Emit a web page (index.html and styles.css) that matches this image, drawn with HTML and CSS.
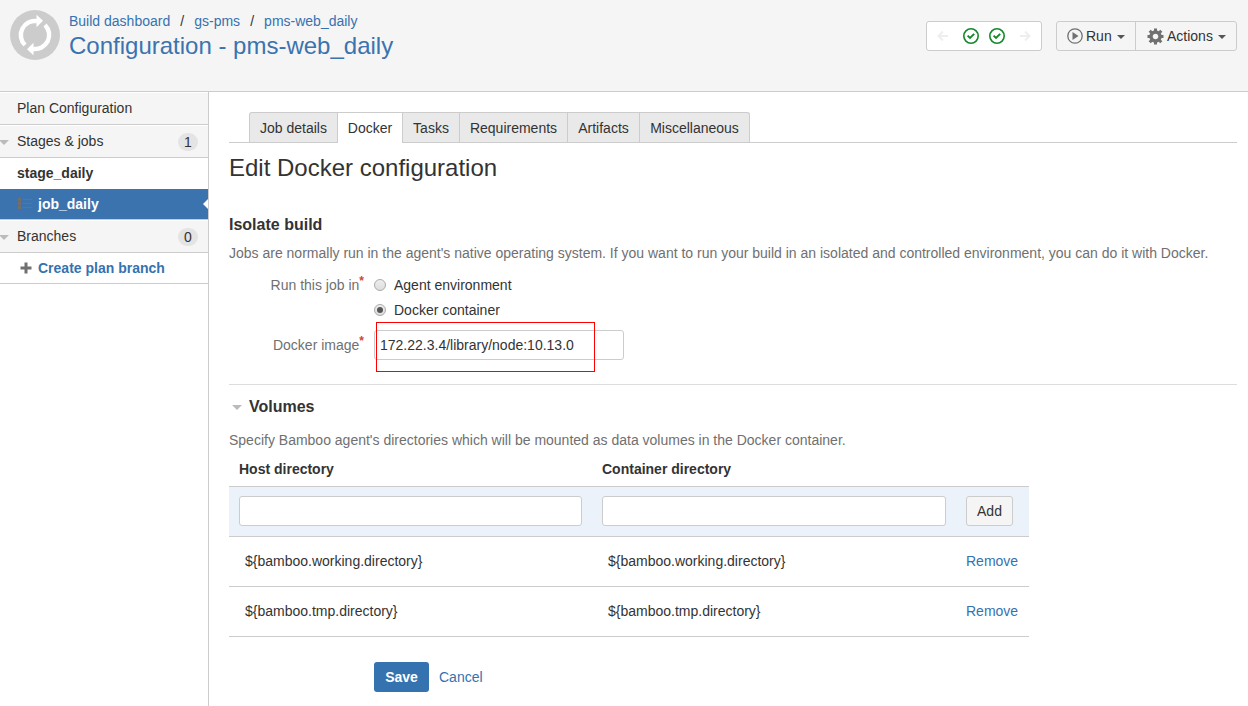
FILE: index.html
```html
<!DOCTYPE html>
<html lang="en">
<head>
<meta charset="utf-8">
<title>Configuration - pms-web_daily</title>
<link rel="stylesheet" href="styles.css">
</head>
<body>
<header class="page-header">
  <svg class="avatar" width="50" height="50" viewBox="0 0 50 50">
    <circle cx="25" cy="25" r="25" fill="#ccc"/>
    <g fill="none" stroke="#fff" stroke-width="4.400">
      <path d="M15 35A14 14 0 0 1 27 11.200"/>
      <path d="M35 15A14 14 0 0 1 23 38.800"/>
    </g>
    <path d="M26.500 4.800l6.500 6-6.500 6.400zM23.500 45.200l-6.500-6 6.500-6.400z" fill="#fff"/>
  </svg>
  <div class="heading">
    <nav class="crumbs"><a>Build dashboard</a><i>/</i><a>gs-pms</a><i>/</i><a>pms-web_daily</a></nav>
    <div class="plan-name">Configuration - pms-web_daily</div>
  </div>
  <div class="history">
    <svg width="12" height="12" viewBox="0 0 12 12" fill="none" stroke="#eee" stroke-width="2"><path d="M11 6H2M6 1.500L1.500 6 6 10.500"/></svg>
    <svg class="ok" width="16" height="16" viewBox="0 0 16 16" fill="none" stroke="#14892c"><circle cx="8" cy="8" r="7.200" stroke-width="1.600"/><path d="M4.600 7.600l2.400 2.300 4.200-4" stroke-width="2"/></svg>
    <svg class="ok" width="16" height="16" viewBox="0 0 16 16" fill="none" stroke="#14892c"><circle cx="8" cy="8" r="7.200" stroke-width="1.600"/><path d="M4.600 7.600l2.400 2.300 4.200-4" stroke-width="2"/></svg>
    <svg width="12" height="12" viewBox="0 0 12 12" fill="none" stroke="#eee" stroke-width="2"><path d="M1 6h9M6 1.500L10.500 6 6 10.500"/></svg>
  </div>
  <div class="button-group">
    <div class="run"><svg width="16" height="16" viewBox="0 0 16 16"><circle cx="8" cy="8" r="7.200" fill="none" stroke="#707070" stroke-width="1.300"/><path d="M5.500 4l6 4-6 4z" fill="#707070"/></svg><span>Run</span><b class="caret"></b></div>
    <div class="actions"><svg width="17" height="17" viewBox="-8.500 -8.500 17 17"><circle r="4.500" fill="none" stroke="#707070" stroke-width="3.400"/><g stroke="#707070" stroke-width="3"><path d="M0-5v-3M0 5v3M-5 0h-3M5 0h3M3.800-3.800l2-2M-3.800 3.800l-2 2M3.800 3.800l2 2M-3.800-3.800l-2-2"/></g></svg><span>Actions</span><b class="caret"></b></div>
  </div>
</header>
<div class="columns">
  <aside class="sidebar">
    <div class="side-row grey plan">Plan Configuration</div>
    <div class="side-row grey section"><b class="twixie"></b>Stages &amp; jobs<span class="count">1</span></div>
    <div class="side-row stage">stage_daily</div>
    <div class="side-row job">
      <svg width="15" height="12" viewBox="0 0 15 12" fill="#707070" shape-rendering="crispEdges"><path d="M0 0h3v3H0zM0 4h3v3H0zM0 8h3v3H0zM5 1h9v1H5zM5 5h9v1H5zM5 9h9v1H5z"/></svg>
      <span>job_daily</span><b class="pointer"></b>
    </div>
    <div class="side-row grey section"><b class="twixie"></b>Branches<span class="count">0</span></div>
    <div class="side-row create"><svg width="12" height="12" viewBox="0 0 12 12"><path d="M4.500 0.500h3v4H11.500v3H7.500V11.500h-3V7.500H.5v-3h4z" fill="#707070"/></svg><a>Create plan branch</a></div>
  </aside>
  <main class="content">
    <nav class="tabs">
      <a class="tab t-job">Job details</a><a class="tab t-docker">Docker</a><a class="tab t-tasks">Tasks</a><a class="tab t-req">Requirements</a><a class="tab t-art">Artifacts</a><a class="tab t-misc">Miscellaneous</a>
    </nav>
    <h1>Edit Docker configuration</h1>
    <h2>Isolate build</h2>
    <p class="desc isolate">Jobs are normally run in the agent's native operating system. If you want to run your build in an isolated and controlled environment, you can do it with Docker.</p>
    <div class="field"><div class="label">Run this job in<sup>*</sup></div><span class="radio"></span><span>Agent environment</span></div>
    <div class="field second"><div class="label"></div><span class="radio checked"></span><span>Docker container</span></div>
    <div class="field image"><div class="label">Docker image<sup>*</sup></div><div class="text-input">172.22.3.4/library/node:10.13.0<span class="marker"></span></div></div>
    <div class="divider"></div>
    <h2 class="volumes"><b class="twixie-inline"></b>Volumes</h2>
    <p class="desc mounted">Specify Bamboo agent's directories which will be mounted as data volumes in the Docker container.</p>
    <div class="table">
      <div class="tr head"><span>Host directory</span><span>Container directory</span></div>
      <div class="tr add"><span class="box"></span><span class="box"></span><span class="add-button">Add</span></div>
      <div class="tr"><span class="value">${bamboo.working.directory}</span><span class="value">${bamboo.working.directory}</span><a>Remove</a></div>
      <div class="tr"><span class="value">${bamboo.tmp.directory}</span><span class="value">${bamboo.tmp.directory}</span><a>Remove</a></div>
    </div>
    <div class="buttons"><span class="save">Save</span><a>Cancel</a></div>
  </main>
</div>
</body>
</html>
```
FILE: styles.css
```css
* { box-sizing: border-box; }
body { margin: 0; height: 706px; overflow: hidden; display: flex; flex-direction: column; background: #fff; color: #333; font: 14px/20px Arial, "Liberation Sans", sans-serif; }
a { color: #3572b0; }
svg { display: block; flex: none; }
h1, h2, p { margin: 0; }

.page-header { height: 92px; flex: none; display: flex; align-items: flex-start; background: #f5f5f5; border-bottom: 1px solid #ccc; padding: 10px 11px 0 10px; }
.heading { margin-left: 9px; padding-top: 1px; flex: 1; }
.crumbs { display: flex; }
.crumbs i { font-style: normal; width: 24px; text-align: center; }
.plan-name { font-size: 24px; line-height: 30px; color: #3b73af; }
.history { width: 116px; height: 30px; margin-top: 11px; border: 1px solid #ccc; border-radius: 3px; background: #fff; display: flex; align-items: center; padding-left: 10px; }
.history .ok { margin-left: 14px; }
.history .ok + .ok { margin-left: 10px; }
.history .ok + svg:last-child { margin-left: 14px; }
.button-group { display: flex; height: 30px; margin: 11px 0 0 14px; border: 1px solid #ccc; border-radius: 3px; }
.button-group > div { display: flex; align-items: center; }
.run { width: 79px; border-right: 1px solid #ccc; padding-left: 10px; }
.actions { width: 100px; padding-left: 11px; }
.run span { margin-left: 3px; }
.actions span { margin-left: 3px; }
.caret { margin: 2px 0 0 5px; border: 4px solid transparent; border-top-color: #555; border-bottom: 0; }

.columns { flex: 1; display: flex; min-height: 0; }
.sidebar { width: 209px; flex: none; border-right: 1px solid #ccc; }
.side-row { position: relative; display: flex; align-items: center; padding-left: 17px; }
.grey { background: #f5f5f5; border-bottom: 1px solid #ccc; border-top: 1px solid #fff; }
.plan { height: 33px; padding-bottom: 1px; }
.section { height: 33px; padding-bottom: 1px; }
.stage { height: 31px; padding-bottom: 1px; font-weight: bold; }
.job { height: 31px; background: #3b73af; border-bottom: 1px solid #ccc; color: #fff; font-weight: bold; padding-left: 18px; }
.job span { margin-left: 5px; }
.create { height: 31px; border-bottom: 1px solid #ccc; font-weight: bold; padding-left: 20px; }
.create a { margin-left: 6px; }
.count { margin: 2px 10px 0 auto; width: 20px; height: 18px; border-radius: 9px; background: #e4e4e4; text-align: center; line-height: 18px; }
.twixie { position: absolute; left: -1px; top: 14px; border: 5px solid transparent; border-top-color: #bbb; border-bottom: 0; }
.pointer { position: absolute; right: 0; top: 10px; border: 5px solid transparent; border-right-color: #fff; border-left: 0; }

.content { flex: 1; min-width: 0; padding: 20px 11px 0 20px; }
.tabs { display: flex; height: 31px; padding-left: 20px; border-bottom: 1px solid #ccc; }
.tab { height: 30px; padding-top: 5px; background: #e9e9e9; color: #333; text-align: center; border-top: 1px solid #ccc; border-right: 1px solid #ccc; white-space: nowrap; }
.t-job { width: 89px; border-left: 1px solid #ccc; border-radius: 3px 0 0; }
.t-docker { width: 65px; height: 31px; background: #fff; }
.t-tasks { width: 57px; }
.t-req { width: 108px; }
.t-art { width: 72px; }
.t-misc { width: 110px; border-radius: 0 3px 0 0; }
h1 { font-size: 24px; line-height: 28px; font-weight: normal; margin-top: 11px; }
h2 { font-size: 16px; line-height: 20px; margin-top: 33px; }
.desc { color: #707070; white-space: nowrap; }
.isolate { margin: 8px 0 12px; }
.field { display: flex; height: 20px; align-items: center; }
.second { margin-top: 5px; }
.image { height: 30px; margin-top: 10px; }
.label { width: 135px; margin-right: 10px; color: #707070; text-align: right; }
.label sup { color: #d04437; line-height: 0; font-size: 12px; font-weight: bold; vertical-align: 5px; }
.radio { width: 12px; height: 12px; margin: -1px 8px 0 0; border: 1px solid #aaa; border-radius: 50%; background: linear-gradient(#eee, #ddd); display: flex; align-items: center; justify-content: center; }
.checked::after { content: ""; width: 6px; height: 6px; border-radius: 50%; background: #555; }
.text-input { position: relative; width: 250px; height: 30px; border: 1px solid #ccc; border-radius: 3px; padding: 4px 5px; }
.marker { position: absolute; left: 1px; top: -9px; width: 219px; height: 50px; border: 1px solid #f00; }
.divider { height: 1px; background: #ddd; margin-top: 24px; }
.volumes { display: flex; align-items: center; margin-top: 12px; }
.twixie-inline { margin: 0 7px 0 3px; border: 5px solid transparent; border-top-color: #bbb; border-bottom: 0; }
.mounted { margin-top: 13px; }

.table { width: 800px; }
.tr { display: grid; grid-template-columns: 343px 344px 1fr; column-gap: 20px; align-items: center; height: 50px; padding: 0 0 1px 10px; border-bottom: 1px solid #ccc; }
.tr.head { height: 37px; padding: 2px 0 0 10px; font-weight: bold; }
.add { background: #ebf2f9; }
.box { height: 30px; background: #fff; border: 1px solid #ccc; border-radius: 3px; }
.add-button { width: 47px; height: 30px; border: 1px solid #ccc; border-radius: 3px; background: #f5f5f5; text-align: center; line-height: 28px; }
.value { padding-left: 6px; }
.buttons { display: flex; align-items: center; margin: 25px 0 0 145px; }
.save { width: 55px; height: 30px; margin-right: 10px; border-radius: 3px; background: #3572b0; color: #fff; font-weight: bold; text-align: center; line-height: 30px; }
```
